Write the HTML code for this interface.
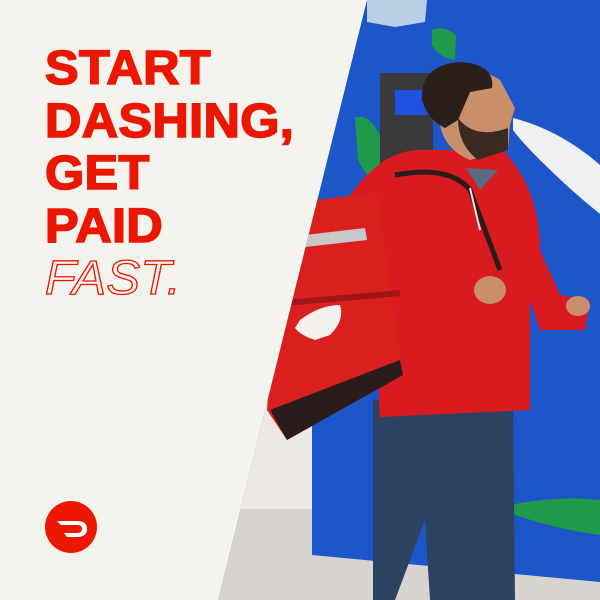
<!DOCTYPE html>
<html><head><style>
html,body{margin:0;padding:0}
body{width:600px;height:600px;overflow:hidden;position:relative;background:#f5f3ee;font-family:"Liberation Sans",sans-serif}
svg{position:absolute;left:0;top:0}
.t{position:absolute;left:45px;font-weight:bold;font-size:48.5px;line-height:52.5px;color:#eb1700;letter-spacing:0.3px;top:42px;transform:scaleX(1.04);transform-origin:left;-webkit-text-stroke:1.6px #eb1700}
.f{color:#f5f3ee;-webkit-text-stroke:1.3px #eb1700;font-style:italic;font-weight:normal}
</style></head><body>
<svg width="600" height="600" viewBox="0 0 600 600">
<defs><clipPath id="c"><polygon points="367,0 600,0 600,600 218,600"/></clipPath></defs>
<g clip-path="url(#c)">
<rect x="200" y="0" width="400" height="600" fill="#1d56c8"/>
<rect x="200" y="400" width="112" height="110" fill="#ece9e4"/>
<polygon points="200,509 312,509 312,555 600,582 600,600 200,600" fill="#d7d4cf"/>
<polygon points="367,0 427,0 425,22 395,27 367,22" fill="#b8cfe6"/>
<path d="M432,30 Q445,25 456,35 L455,60 Q440,58 432,45Z" fill="#1f9a4a"/>
<path d="M355,118 Q368,112 380,135 L388,190 Q370,185 358,160Z" fill="#1f9a4a"/>
<path d="M375,480 L405,470 L408,505 L380,509Z" fill="#1f9a4a"/>
<path d="M510,505 Q560,495 600,500 L600,535 Q560,530 515,515Z" fill="#1f9a4a"/>
<path d="M513,118 Q560,130 600,165 L600,214 Q570,190 540,160 Q520,140 513,130Z" fill="#eef0f2"/>
<rect x="380" y="73" width="53" height="107" fill="#3a3a3c"/>
<rect x="395" y="90" width="35" height="25" fill="#2050e0"/>
<path d="M373,400 L513,400 L515,600 L430,600 L425,520 L395,600 L373,600Z" fill="#2c4263"/>
<path d="M347,200 Q380,150 420,150 L503,150 Q540,190 540,250 L560,295 L590,300 L585,330 L540,330 L530,300 L530,410 L380,417 L375,330 Q345,320 347,280Z" fill="#d91a1f"/>
<path d="M466,168 L480,190 L498,170Z" fill="#5a6a80"/>
<path d="M395,175 Q450,165 470,190 L500,270" stroke="#2a1c1c" stroke-width="5" fill="none"/>
<path d="M470,188 L480,230" stroke="#f0e0e0" stroke-width="2" fill="none"/>
<ellipse cx="490" cy="290" rx="16" ry="14" fill="#c98e6a"/>
<ellipse cx="578" cy="306" rx="12" ry="10" fill="#c98e6a"/>
<path d="M440,75 Q470,60 500,80 L515,108 L510,125 L508,150 L470,160 Q445,150 440,125Z" fill="#c98e6a"/>
<path d="M422,100 Q420,65 460,62 Q495,64 492,88 L470,92 L458,120 L445,128 Q428,120 422,100Z" fill="#2a1f1a"/>
<path d="M458,118 Q475,140 508,128 L508,150 L478,160 Q458,145 458,118Z" fill="#3a2a22"/>
<polygon points="317,200 377,192 403,375 287,440 267,410 280,230" fill="#d9201c"/>
<polygon points="270,410 287,440 403,375 400,360" fill="#2a1c1c"/>
<polygon points="285,300 400,290 400,296 285,306" fill="#a01515"/>
<polygon points="305,235 365,228 367,240 305,247" fill="#c8c8c8"/>
<path d="M300,320 Q320,305 340,305 Q345,320 330,335 L315,340 Q300,335 295,328Z" fill="#f4f0ee"/>
</g>
<circle cx="71" cy="527" r="26" fill="#eb1700"/>
<path d="M57,521 L77,521 Q87,521 87,529 Q87,537 77,537 L67,537 L64,533 L77,533 Q82,533 82,529 Q82,525 77,525 L61,525Z" fill="#fff"/>
</svg>
<div class="t">START<br>DASHING,<br>GET<br>PAID<br><span class="f">FAST.</span></div>
</body></html>
